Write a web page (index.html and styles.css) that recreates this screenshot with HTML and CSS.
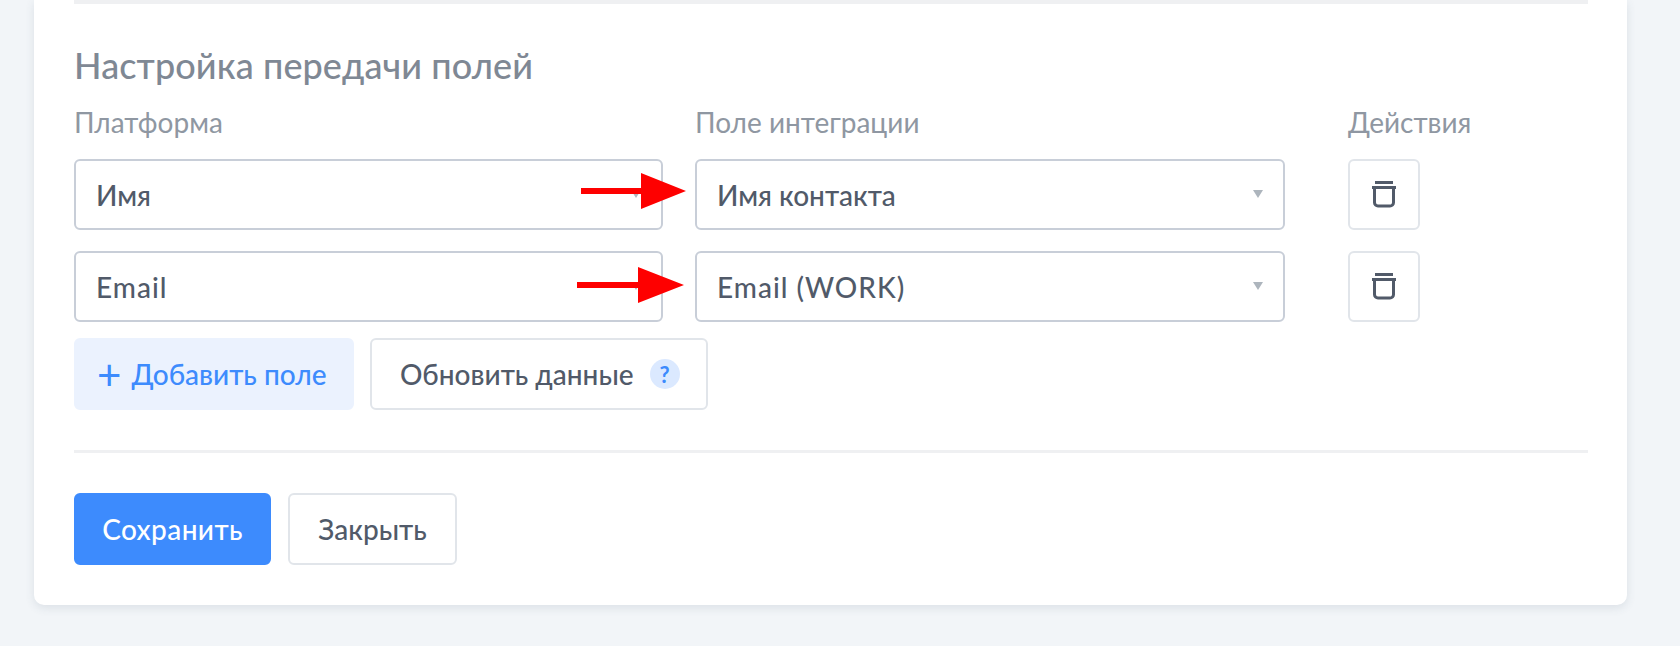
FILE: index.html
```html
<!DOCTYPE html>
<html lang="ru">
<head>
    <meta charset="UTF-8">
    <meta name="viewport" content="width=device-width, initial-scale=1.0">
    <title>Настройка передачи полей</title>
    <link rel="stylesheet" href="styles.css">
</head>
<body>
    <div class="card">
        <div class="divider top"></div>
        <h2>Настройка передачи полей</h2>
        <div class="fields">
            <div class="row head">
                <div class="col-a">Платформа</div>
                <div class="col-b">Поле интеграции</div>
                <div class="col-c">Действия</div>
            </div>
            <div class="row">
                <div class="col-a select"><span>Имя</span><i class="caret"></i></div>
                <div class="col-b select"><span>Имя контакта</span><i class="caret"></i></div>
                <div class="col-c">
                    <button class="btn icon-btn" aria-label="Удалить">
                        <svg width="26" height="28" viewBox="0 0 26 28"><path d="M4 1.5h18M1 6.500h24M3.500 6.500v15a3.500 3.500 0 0 0 3.500 3.500h12a3.500 3.500 0 0 0 3.500-3.500v-15" fill="none" stroke="#515a69" stroke-width="3"/></svg>
                    </button>
                </div>
            </div>
            <div class="row">
                <div class="col-a select"><span class="latin">Email</span><i class="caret"></i></div>
                <div class="col-b select"><span class="latin">Email (WORK)</span><i class="caret"></i></div>
                <div class="col-c">
                    <button class="btn icon-btn" aria-label="Удалить">
                        <svg width="26" height="28" viewBox="0 0 26 28"><path d="M4 1.5h18M1 6.500h24M3.500 6.500v15a3.500 3.500 0 0 0 3.500 3.500h12a3.500 3.500 0 0 0 3.500-3.500v-15" fill="none" stroke="#515a69" stroke-width="3"/></svg>
                    </button>
                </div>
            </div>
            <!-- красные стрелки поверх полей -->
            <svg class="arrow arrow-1" width="105" height="36" viewBox="0 0 105 36"><path d="M0 15h60V0l45 18-45 18V21H0z" fill="#fe0000"/></svg>
            <svg class="arrow arrow-2" width="107" height="36" viewBox="0 0 107 36"><path d="M0 15h61V0l46 18-46 18V21H0z" fill="#fe0000"/></svg>
        </div>
        <div class="actions">
            <button class="btn btn-light"><span class="plus">+</span>Добавить поле</button>
            <button class="btn btn-update">Обновить данные<span class="hint">?</span></button>
        </div>
        <div class="divider"></div>
        <div class="footer">
            <button class="btn btn-primary">Сохранить</button>
            <button class="btn btn-close">Закрыть</button>
        </div>
    </div>
</body>
</html>
```

FILE: styles.css
```css
html, body { height: 100%; }
body { margin: 0; background: #f2f5f8; font-family: Lato, "Noto Sans", sans-serif; overflow: hidden; color: #515a69; }

.card { box-sizing: border-box; width: 1593px; height: 605px; margin-left: 34px; padding: 0 39px 0 40px; background: #fff; border-radius: 0 0 10px 10px; box-shadow: 0 3px 10px rgba(60, 80, 110, .12); }
.divider { height: 3px; background: #eff0f2; }
.divider.top { height: 4px; }
h2 { margin: 42px 0 0; font-size: 36px; line-height: 38px; font-weight: 500; color: #7f8894; letter-spacing: .1px; }

.fields { position: relative; }
.row { display: flex; margin-bottom: 21px; }
.row.head { margin: 23px 0 22px; height: 30px; line-height: 30px; font-size: 28px; color: #8f97a2; }
.col-a { width: 589px; margin-right: 32px; }
.col-b { width: 590px; margin-right: 63px; }
.col-c { width: 120px; }

.select { box-sizing: border-box; display: flex; align-items: center; justify-content: space-between; height: 71px; padding: 0 20px; background: #fff; border: 2px solid #c8ced8; border-radius: 6px; font-size: 28px; font-weight: 500; }
.latin { letter-spacing: 1px; }
.caret { width: 0; height: 0; margin-top: -2px; border-left: 5.500px solid transparent; border-right: 5.500px solid transparent; border-top: 8px solid #adb5bd; }

.btn { box-sizing: border-box; height: 72px; padding: 0 28px; background: #fff; border: 2px solid #e1e5ea; border-radius: 6px; font: 500 28px Lato, "Noto Sans", sans-serif; color: #515a69; display: inline-flex; align-items: center; white-space: nowrap; }
.icon-btn { width: 72px; height: 71px; padding: 0; justify-content: center; }

.arrow { position: absolute; }
.arrow-1 { left: 507px; top: 66px; }
.arrow-2 { left: 503px; top: 160px; }

.actions { display: flex; gap: 16px; margin-top: -5px; }
.btn-light { width: 280px; background: #ebf2fe; border-color: #ebf2fe; color: #3d8bfd; padding: 0 21px; }
.plus { font-size: 42px; font-weight: 400; line-height: 1; margin-right: 10px; }
.btn-update { width: 338px; padding: 0 28px; }
.hint { flex: none; width: 30px; height: 30px; margin-left: 16px; border-radius: 50%; background: #dbe9ff; color: #3d8bfd; font-size: 22px; font-weight: 700; display: flex; align-items: center; justify-content: center; }

.actions + .divider { margin-top: 40px; }
.footer { display: flex; gap: 17px; margin-top: 40px; }
.btn-primary { width: 197px; background: #3d8bfd; border-color: #3d8bfd; color: #fff; justify-content: center; padding: 0; letter-spacing: .4px; }
.btn-close { width: 169px; justify-content: center; padding: 0; }
```
